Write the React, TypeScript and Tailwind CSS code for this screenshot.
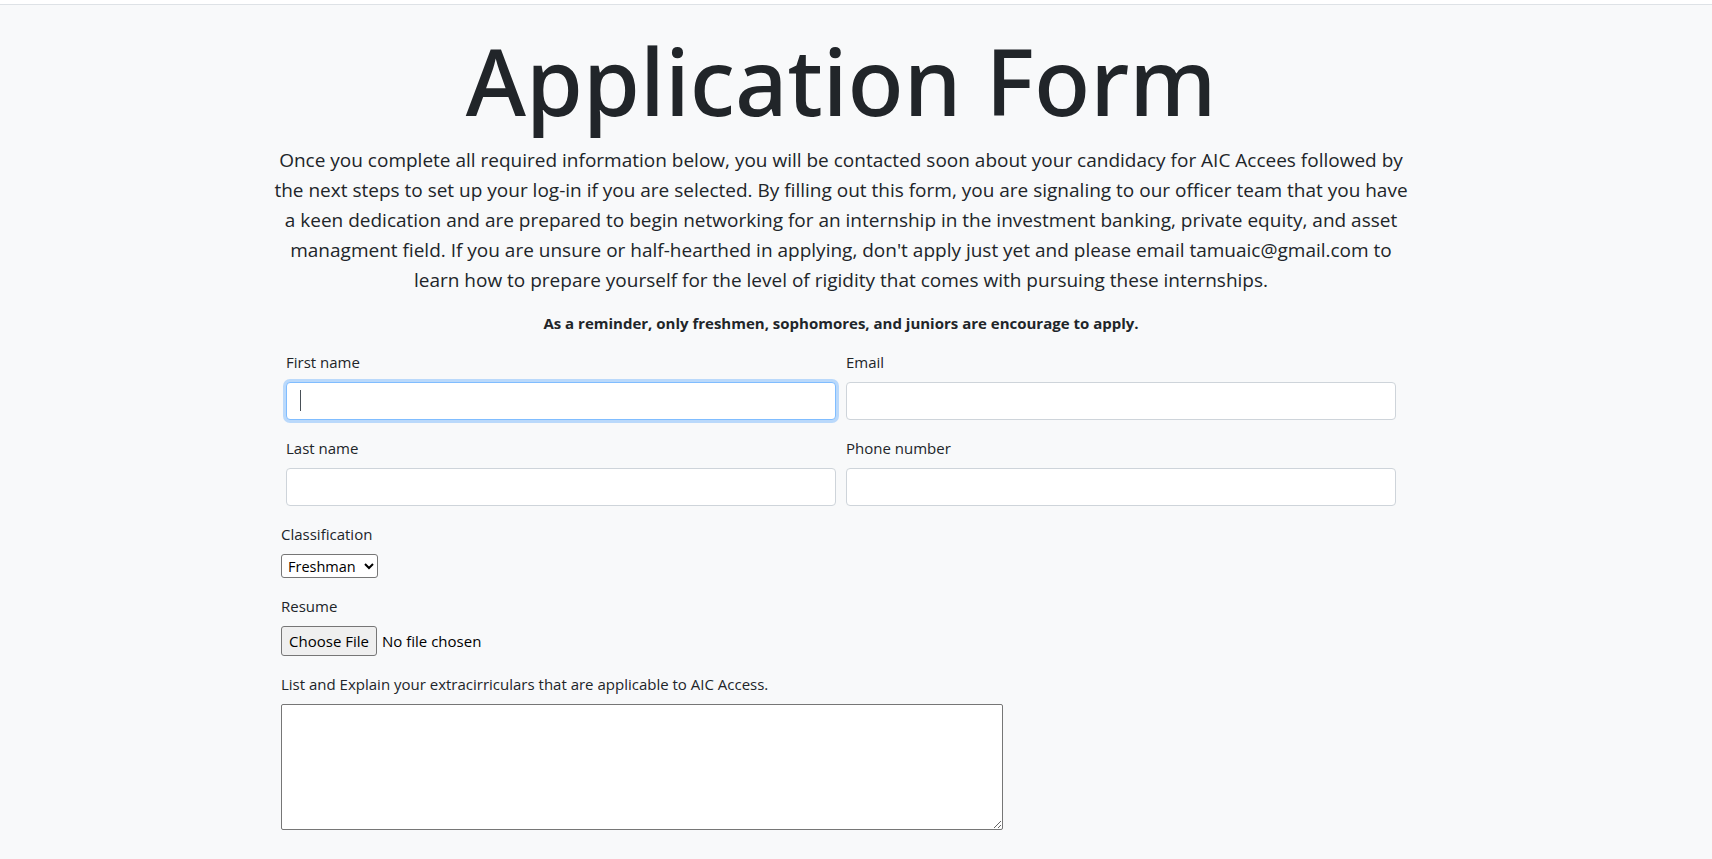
import React from "react";

export default function App() {
  return (
    <div className="min-h-screen bg-[#f8f9fa] font-['Open_Sans',sans-serif] text-[#212529]">
      <div className="h-[5px] bg-white border-b border-[#dee2e6]" />
      <div className="w-[1682px]">
        <div className="w-[1140px] mx-auto px-[15px]">
          <h1 className="mt-[19px] mb-[8px] text-center text-[92px] leading-[113px] font-medium font-['Noto_Sans',sans-serif]">
            Application Form
          </h1>
          <p className="-mx-[15px] mb-[16px] text-center text-[19px] leading-[30px]">
            Once you complete all required information below, you will be contacted soon about your candidacy for AIC Accees followed by the next steps to set up your log-in if you are selected. By filling out this form, you are signaling to our officer team that you have a keen dedication and are prepared to begin networking for an internship in the investment banking, private equity, and asset managment field. If you are unsure or half-hearthed in applying, don't apply just yet and please email tamuaic@gmail.com to learn how to prepare yourself for the level of rigidity that comes with pursuing these internships.
          </p>
          <p className="mb-[15px] text-center text-[15px] leading-[24px] font-bold">
            As a reminder, only freshmen, sophomores, and juniors are encourage to apply.
          </p>
          <form className="text-[15px] leading-[24px]">
            <div className="-mx-[5px] grid grid-cols-2">
              <div className="px-[5px] mb-[16px]">
                <label className="block mb-[8px]">First name</label>
                <div className="relative">
                  <input
                    type="text"
                    className="block w-full h-[38px] bg-white border border-[#80bdff] rounded-[4px] shadow-[0_0_0_3px_rgba(0,123,255,0.25)] outline-none px-[12px]"
                  />
                  <span className="absolute left-[14px] top-[8px] w-[1px] h-[21px] bg-[#495057]" />
                </div>
              </div>
              <div className="px-[5px] mb-[16px]">
                <label className="block mb-[8px]">Email</label>
                <input
                  type="email"
                  className="block w-full h-[38px] bg-white border border-[#ced4da] rounded-[4px] outline-none px-[12px]"
                />
              </div>
              <div className="px-[5px] mb-[16px]">
                <label className="block mb-[8px]">Last name</label>
                <input
                  type="text"
                  className="block w-full h-[38px] bg-white border border-[#ced4da] rounded-[4px] outline-none px-[12px]"
                />
              </div>
              <div className="px-[5px] mb-[16px]">
                <label className="block mb-[8px]">Phone number</label>
                <input
                  type="tel"
                  className="block w-full h-[38px] bg-white border border-[#ced4da] rounded-[4px] outline-none px-[12px]"
                />
              </div>
            </div>
            <div className="-ml-[5px]">
              <div className="mb-[16px]">
                <label className="block mb-[8px]">Classification</label>
                <select className="block w-[97px] h-[24px] bg-white border border-[#767676] rounded-[3px] text-[14.5px] text-black pl-[2px]">
                  <option>Freshman</option>
                  <option>Sophomore</option>
                  <option>Junior</option>
                </select>
              </div>
              <div className="mb-[16px]">
                <label className="block mb-[8px]">Resume</label>
                <div className="flex items-center h-[30px]">
                  <span className="flex items-center justify-center w-[96px] h-[30px] bg-[#efefef] border border-[#767676] rounded-[3px] text-black">
                    Choose File
                  </span>
                  <span className="ml-[5px] text-black">No file chosen</span>
                </div>
              </div>
              <div className="mb-[16px]">
                <label className="block mb-[8px]">
                  List and Explain your extracirriculars that are applicable to AIC Access.
                </label>
                <textarea className="block w-[722px] h-[126px] bg-white border border-[#767676] rounded-[2px] outline-none" />
              </div>
            </div>
          </form>
        </div>
      </div>
    </div>
  );
}
